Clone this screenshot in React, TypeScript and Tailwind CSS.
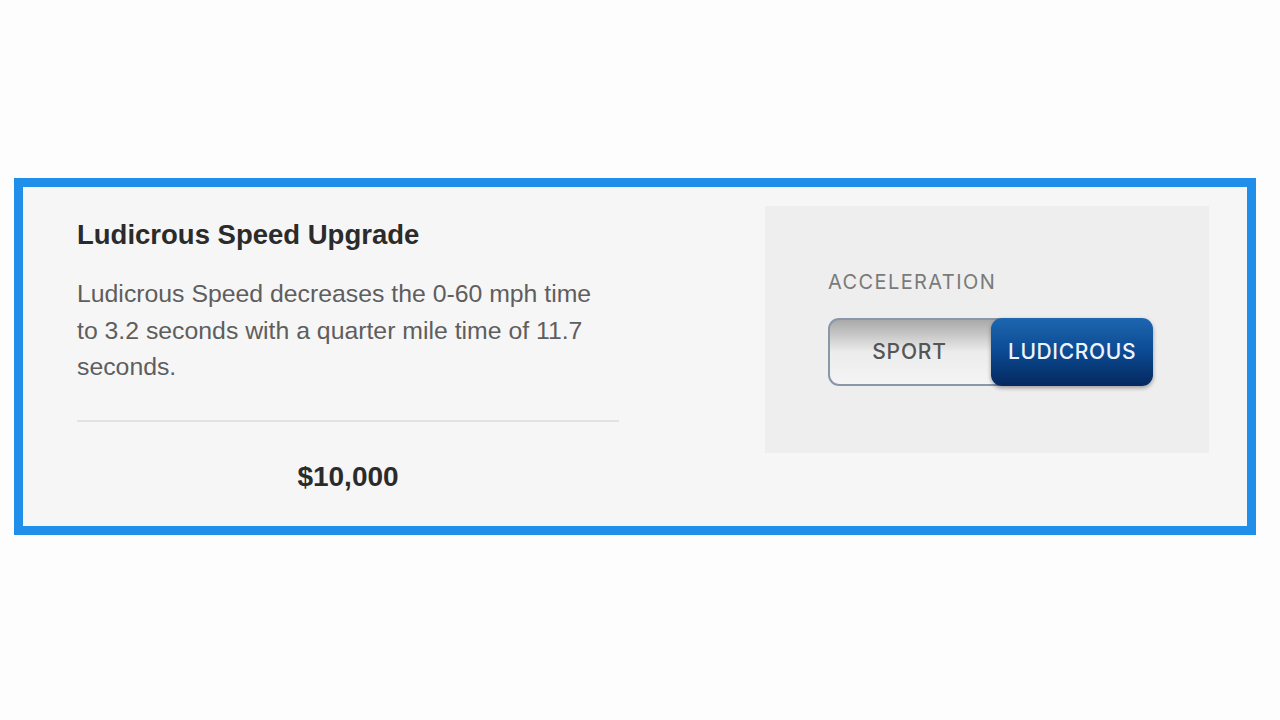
export default function App() {
  return (
    <div className="min-h-[720px] w-[1280px] bg-[#fdfdfd] pl-[14px] pt-[178px]" style={{ fontFamily: '"Liberation Sans", Arial, sans-serif' }}>
      <div className="flex h-[357px] w-[1242px] border-[9px] border-[#1f8fe9] bg-[#f6f6f6]">
        <div className="ml-[54px] w-[542px] pt-[32px]">
          <div className="text-[27.5px] font-bold leading-[32px] text-[#2b2b2b]">Ludicrous Speed Upgrade</div>
          <p className="mt-[25px] w-[525px] text-[24.8px] leading-[36.5px] text-[#5e5e5e]">
            Ludicrous Speed decreases the 0-60 mph time to 3.2 seconds with a quarter mile time of 11.7 seconds.
          </p>
          <div className="mt-[34px] h-[2px] bg-[#e2e2e2]" />
          <div className="mt-[38px] text-center text-[28px] font-bold leading-[34px] text-[#2b2b2b]">$10,000</div>
        </div>
        <div className="ml-auto mr-[38px] mt-[19px] h-[247px] w-[444px] bg-[#eeeeee] pl-[63px] pt-[64px]" style={{ fontFamily: 'Inter, "Open Sans", sans-serif' }}>
          <div className="text-[20px] leading-[24px] tracking-[0.07em] text-[#7a7a7a]">ACCELERATION</div>
          <div className="mt-[24px] flex h-[68px] w-[325px]">
            <div className="flex w-[175px] items-center justify-center rounded-l-[11px] border-2 border-r-0 border-[#8a97aa] bg-gradient-to-b from-[#a9a9a9] via-[#ececec] to-[#f4f4f4] pr-[14px] text-[21px] font-medium tracking-[0.04em] text-[#555]">
              SPORT
            </div>
            <div className="-ml-[12px] flex w-[162px] items-center justify-center rounded-[11px] bg-gradient-to-b from-[#1d67b0] via-[#0b4a92] to-[#05285e] text-[21px] font-medium tracking-[0.03em] text-[#eef4ff] shadow-[0_2px_4px_rgba(0,0,0,0.35)]">
              LUDICROUS
            </div>
          </div>
        </div>
      </div>
    </div>
  );
}
